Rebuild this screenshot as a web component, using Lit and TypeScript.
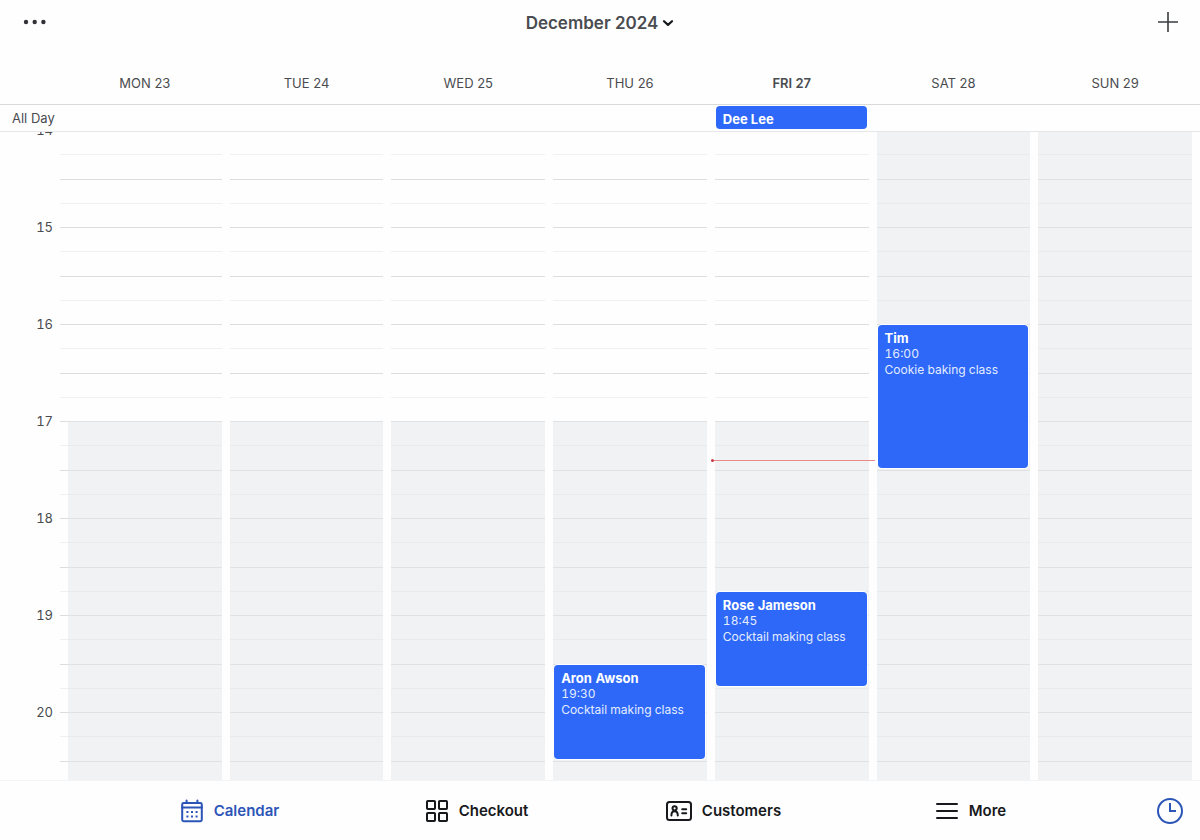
import { LitElement, html, css, svg, nothing } from "lit";
import { customElement, property } from "lit/decorators.js";
import { classMap } from "lit/directives/class-map.js";

interface CalendarEvent {
  name: string;
  start: number;
  end: number;
  title: string;
}

interface Day {
  label: string;
  today?: boolean;
  opensUntil: number;
  allDay?: string;
  now?: number;
  events: CalendarEvent[];
}

const FIRST_HOUR = 14;
const HOUR_HEIGHT = 97;
const HOURS = [14, 15, 16, 17, 18, 19, 20];

const DAYS: Day[] = [
  { label: "MON 23", opensUntil: 17, events: [] },
  { label: "TUE 24", opensUntil: 17, events: [] },
  { label: "WED 25", opensUntil: 17, events: [] },
  {
    label: "THU 26",
    opensUntil: 17,
    events: [{ name: "Aron Awson", start: 19.5, end: 20.5, title: "Cocktail making class" }],
  },
  {
    label: "FRI 27",
    today: true,
    opensUntil: 17,
    allDay: "Dee Lee",
    now: 17.4,
    events: [{ name: "Rose Jameson", start: 18.75, end: 19.75, title: "Cocktail making class" }],
  },
  {
    label: "SAT 28",
    opensUntil: 0,
    events: [{ name: "Tim", start: 16, end: 17.5, title: "Cookie baking class" }],
  },
  { label: "SUN 29", opensUntil: 0, events: [] },
];

const offset = (hour: number) => Math.round((hour - FIRST_HOUR) * HOUR_HEIGHT);
const clock = (hour: number) =>
  `${Math.floor(hour)}:${String(Math.round((hour % 1) * 60)).padStart(2, "0")}`;

const icons = {
  calendar: svg`
    <rect x="2.2" y="4" width="19.6" height="18.2" rx="1.4" fill="none" stroke="currentColor" stroke-width="2"/>
    <path d="M2 8.6h20M6.6 1.6V4M17.4 1.6V4" fill="none" stroke="currentColor" stroke-width="2" stroke-linecap="round"/>
    <path d="M6.4 12h2v2h-2zM11 12h2v2h-2zM15.6 12h2v2h-2zM6.4 16.4h2v2h-2zM11 16.4h2v2h-2zM15.6 16.4h2v2h-2z" fill="currentColor"/>`,
  checkout: svg`
    <g fill="none" stroke="currentColor" stroke-width="2">
      <rect x="2" y="2" width="8" height="8" rx="0.8"/><rect x="14" y="2" width="8" height="8" rx="0.8"/>
      <rect x="2" y="14" width="8" height="8" rx="0.8"/><rect x="14" y="14" width="8" height="8" rx="0.8"/>
    </g>`,
  more: svg`<path d="M2 5h20M2 12h20M2 19h20" fill="none" stroke="currentColor" stroke-width="2" stroke-linecap="round"/>`,
};

@customElement("day-column")
export class DayColumn extends LitElement {
  @property({ attribute: false }) day!: Day;

  static styles = css`
    :host {
      display: block;
      position: relative;
      min-width: 0;
    }
    .hour {
      display: grid;
      grid-template-rows: 24px 25px 24px 24px;
    }
    .slot {
      border-top: 1px solid #f0f0f1;
    }
    .slot:nth-child(odd) {
      border-top-color: #dcddde;
    }
    .closed .slot {
      background: #f1f2f4;
      border-top-color: #e8eaeb;
    }
    .closed .slot:nth-child(odd) {
      border-top-color: #dfe1e2;
    }
    .event {
      position: absolute;
      left: 1px;
      right: 2px;
      box-sizing: border-box;
      padding: 5px 7px;
      border-radius: 4px;
      background: #2d68f8;
      color: #e4ecff;
      font-size: 12px;
      line-height: 16px;
      font-variant-numeric: tabular-nums;
      overflow: hidden;
      white-space: nowrap;
      box-shadow: 0 0 0 1px #ffffff;
    }
    .name {
      color: #ffffff;
      font-size: 13px;
      font-weight: 700;
    }
    .now {
      position: absolute;
      z-index: 1;
      left: -4px;
      right: -6px;
      height: 1px;
      background: #e8898c;
    }
    .now::before {
      content: "";
      position: absolute;
      left: 0;
      top: -1px;
      width: 3px;
      height: 3px;
      border-radius: 50%;
      background: #c63f48;
    }
  `;

  render() {
    const { day } = this;
    return html`
      ${HOURS.map(
        (h) => html`<div class=${classMap({ hour: true, closed: h >= day.opensUntil })}>
          <div class="slot"></div>
          <div class="slot"></div>
          <div class="slot"></div>
          <div class="slot"></div>
        </div>`
      )}
      ${day.events.map((e) => {
        const top = offset(e.start) + 1;
        return html`<div class="event" style="top:${top}px;height:${offset(e.end) - top - 2}px">
          <div class="name">${e.name}</div>
          <div>${clock(e.start)}</div>
          <div>${e.title}</div>
        </div>`;
      })}
      ${day.now ? html`<div class="now" style="top:${offset(day.now)}px"></div>` : nothing}
    `;
  }
}

@customElement("app-root")
export class AppRoot extends LitElement {
  static styles = css`
    :host {
      display: flex;
      flex-direction: column;
      height: 100vh;
      overflow: hidden;
      background: #fefefe;
      color: #4a4c50;
      font-family: Inter, "Liberation Sans", sans-serif;
      font-size: 13px;
    }
    button {
      display: flex;
      align-items: center;
      padding: 0;
      border: 0;
      background: none;
      color: inherit;
      font: inherit;
      cursor: pointer;
    }
    svg {
      display: block;
      flex: none;
    }
    .topbar {
      display: grid;
      grid-template-columns: 1fr auto 1fr;
      align-items: center;
      height: 44px;
      padding: 0 21px;
      flex: none;
    }
    .month {
      gap: 4px;
      font-size: 17px;
      font-weight: 600;
      line-height: 24px;
      padding-top: 1px;
    }
    .add {
      justify-self: end;
    }
    .days {
      display: grid;
      grid-template-columns: repeat(7, minmax(0, 1fr));
      column-gap: 8px;
      padding: 0 8px 0 68px;
    }
    .heads {
      flex: none;
      box-sizing: border-box;
      height: 61px;
      align-items: end;
      text-align: center;
      line-height: 20px;
      padding-bottom: 11px;
      border-bottom: 1px solid #d8dadb;
    }
    .today {
      font-weight: 600;
    }
    .all-day {
      display: flex;
      flex: none;
      height: 26px;
      border-bottom: 1px solid #e6e7e8;
    }
    .all-day-label {
      flex: none;
      box-sizing: border-box;
      width: 68px;
      padding-left: 12px;
      line-height: 27px;
    }
    .all-day .days,
    .board .days {
      flex: 1;
      padding-left: 0;
    }
    .chip {
      margin: 1px 2px 0 1px;
      padding: 0 7px;
      border-radius: 4px;
      background: #2d68f8;
      color: #ffffff;
      font-weight: 700;
      line-height: 26px;
      height: 23px;
    }
    .board {
      flex: 1;
      min-height: 0;
      overflow: hidden;
      display: flex;
      align-items: flex-start;
    }
    .times,
    .ticks,
    .board .days {
      margin-top: -2px;
    }
    .times {
      flex: none;
      width: 60px;
      font-variant-numeric: tabular-nums;
    }
    .time {
      display: flow-root;
      box-sizing: border-box;
      height: 97px;
      padding-right: 7px;
      text-align: right;
      line-height: 16px;
    }
    .time span {
      display: block;
      margin-top: -8px;
    }
    .ticks {
      flex: none;
      width: 8px;
    }
    .tick {
      display: grid;
      grid-template-rows: 24px 25px 24px 24px;
    }
    .tick div {
      border-top: 1px solid #f0f0f1;
    }
    .tick div:nth-child(odd) {
      border-top-color: #dcddde;
    }
    .tabs {
      flex: none;
      box-sizing: border-box;
      height: 60px;
      display: grid;
      grid-template-columns: 106px repeat(4, 1fr) 106px;
      align-items: center;
      justify-items: center;
      border-top: 1px solid #f3f4f5;
      color: #17191c;
      font-size: 15px;
      font-weight: 600;
    }
    .tab {
      display: flex;
      align-items: center;
      gap: 10px;
      color: inherit;
      text-decoration: none;
    }
    .tab:first-child {
      grid-column: 2;
    }
    .tab.active,
    .clock {
      color: #2c55b8;
    }
    .clock {
      justify-self: end;
      margin-right: 16px;
    }
  `;

  private tab(label: string, icon: unknown, active = false) {
    return html`<a
      class=${classMap({ tab: true, active })}
      href="#${label.toLowerCase()}"
      aria-current=${active ? "page" : nothing}
      >${icon}<span>${label}</span></a
    >`;
  }

  private icon(shape: unknown) {
    return html`<svg width="24" height="24" viewBox="0 0 24 24" aria-hidden="true">${shape}</svg>`;
  }

  render() {
    return html`
      <header class="topbar">
        <button aria-label="Options">
          <svg width="28" height="12" viewBox="0 0 28 12" fill="#303236">
            <circle cx="5" cy="6" r="2.2" /><circle cx="13.7" cy="6" r="2.2" /><circle cx="22.4" cy="6" r="2.2" />
          </svg>
        </button>
        <button class="month">
          December 2024
          <svg width="12" height="12" viewBox="0 0 12 12" fill="none" stroke="#17191c" stroke-width="2.2" stroke-linecap="round" stroke-linejoin="round">
            <path d="M2 4.2l4 3.7 4-3.7" />
          </svg>
        </button>
        <button class="add" aria-label="Add">
          <svg width="22" height="22" viewBox="0 0 22 22" stroke="#3a3c40" stroke-width="1.6">
            <path d="M1 11h20M11 1v20" />
          </svg>
        </button>
      </header>

      <div class="days heads">
        ${DAYS.map((d) => html`<div class=${classMap({ today: !!d.today })}>${d.label}</div>`)}
      </div>

      <div class="all-day">
        <div class="all-day-label">All Day</div>
        <div class="days">
          ${DAYS.map((d) => html`<div>${d.allDay ? html`<div class="chip">${d.allDay}</div>` : nothing}</div>`)}
        </div>
      </div>

      <main class="board">
        <div class="times">
          ${HOURS.map((h) => html`<div class="time"><span>${h}</span></div>`)}
        </div>
        <div class="ticks">
          ${HOURS.map(() => html`<div class="tick"><div></div><div></div><div></div><div></div></div>`)}
        </div>
        <div class="days">${DAYS.map((d) => html`<day-column .day=${d}></day-column>`)}</div>
      </main>

      <nav class="tabs">
        ${this.tab("Calendar", this.icon(icons.calendar), true)}
        ${this.tab("Checkout", this.icon(icons.checkout))}
        ${this.tab(
          "Customers",
          html`<svg width="26" height="20" viewBox="0 0 26 20" fill="none" stroke="currentColor" stroke-width="2" stroke-linecap="round" aria-hidden="true">
            <rect x="1" y="1" width="24" height="18" rx="2.5" />
            <circle cx="8.6" cy="7.3" r="2.1" />
            <path d="M5.4 14.4c0-2.6 1-4.2 3.2-4.2s3.2 1.6 3.2 4.2M16.2 8.2h4M16.2 12.2h4" />
          </svg>`
        )}
        ${this.tab("More", this.icon(icons.more))}
        <button class="clock" aria-label="Clock in">
          <svg width="28" height="28" viewBox="0 0 28 28" fill="none" stroke="currentColor" stroke-width="2">
            <circle cx="14" cy="14" r="12" />
            <path d="M14 6v8h6" />
          </svg>
        </button>
      </nav>
    `;
  }
}
